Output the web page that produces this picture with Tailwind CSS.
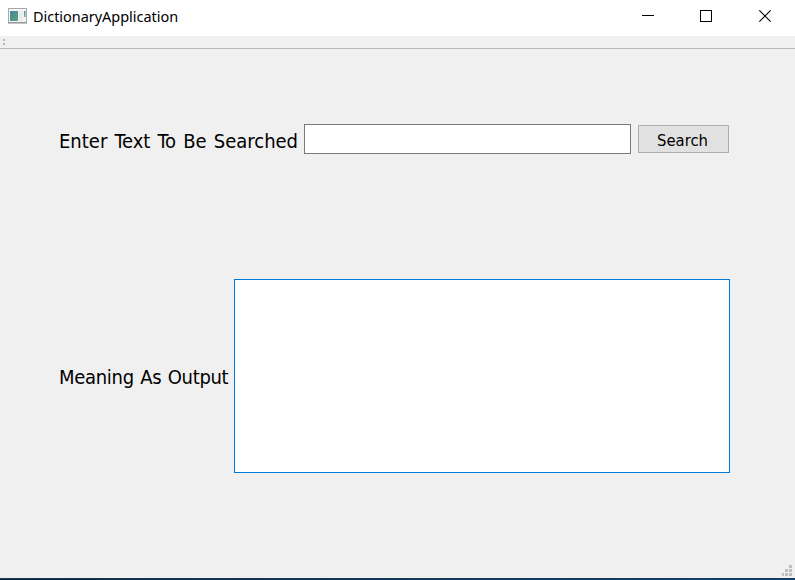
<!DOCTYPE html>
<html lang="en">
<head>
<meta charset="utf-8">
<title>DictionaryApplication</title>
<script src="https://cdn.jsdelivr.net/npm/@tailwindcss/browser@4"></script>
</head>
<body class="h-[580px] w-[795px] overflow-hidden bg-[#f0f0f0] font-['Noto_Sans',sans-serif] text-black">
<div class="flex h-full flex-col">
  <header class="flex h-9 shrink-0 items-start bg-white pl-2">
    <svg class="mt-2 h-4 w-[19px] shrink-0" viewBox="0 0 19 16">
      <defs>
        <linearGradient id="g" x1="0" y1="0" x2="1" y2="1"><stop offset="0" stop-color="#4a80a0"/><stop offset="1" stop-color="#55a878"/></linearGradient>
        <linearGradient id="b" x1="0" y1="0" x2="0" y2="1"><stop offset="0" stop-color="#5289b4"/><stop offset="1" stop-color="#62b87c"/></linearGradient>
      </defs>
      <rect x=".5" y=".5" width="18" height="14" fill="#f4f5f6" stroke="#a5a8ad"/>
      <path d="M0 15h19" stroke="#85888d"/>
      <rect x="2" y="3" width="8" height="10" fill="url(#g)"/>
      <path d="M11 3h4v10h-4z" fill="#e9ebed"/>
      <rect x="16" y="3" width="1.5" height="6" fill="url(#b)"/>
    </svg>
    <h1 class="ml-[6px] mt-[6px] whitespace-nowrap text-[14.5px] leading-[21px] tracking-[-0.04px]">DictionaryApplication</h1>
    <div class="ml-auto mr-6 mt-[10px] flex gap-[46px]">
      <svg class="size-3" viewBox="0 0 12 12" shape-rendering="crispEdges"><path d="M0 5.5h12" stroke="#000"/></svg>
      <svg class="size-3" viewBox="0 0 12 12" shape-rendering="crispEdges"><rect x=".5" y=".5" width="11" height="11" fill="none" stroke="#000"/></svg>
      <svg class="ml-px size-3" viewBox="0 0 12 12"><path d="M.3.3l11.4 11.4M11.7.3L.3 11.7" stroke="#000" stroke-width="1.1"/></svg>
    </div>
  </header>
  <div class="h-[13px] shrink-0 border-b border-[#b9b9b9]">
    <svg class="h-3 w-3" viewBox="0 0 12 12" shape-rendering="crispEdges"><path d="M3 3h2v2h-2zM3 7h2v2h-2z" fill="#b8b8b8"/></svg>
  </div>
  <main class="flex grow flex-col px-[59px] font-['DejaVu_Sans_Condensed','DejaVu_Sans',sans-serif] [font-stretch:condensed]">
    <div class="mt-[75px] flex h-[30px] shrink-0">
      <label for="q" class="w-[245px] shrink-0 whitespace-nowrap pt-[2px] text-[20px] leading-[30px] [word-spacing:1.4px]">Enter Text To Be Searched</label>
      <input id="q" class="h-[30px] w-[327px] border border-[#7a7a7a] bg-white outline-none">
      <button class="ml-[7px] mt-px h-7 w-[91px] border border-[#adadad] bg-[#e1e1e1] pr-[2px] pt-[4px] text-[16.5px] leading-[22px]">Search</button>
    </div>
    <div class="mt-[125px] flex h-[194px] shrink-0 items-center">
      <label for="out" class="w-[175px] shrink-0 whitespace-nowrap pt-[2px] text-[20px] leading-[30px] tracking-[-0.3px] [word-spacing:1px]">Meaning As Output</label>
      <textarea id="out" class="h-[194px] w-[496px] resize-none border border-[#0078d7] bg-white outline-none"></textarea>
    </div>
  </main>
  <footer class="flex shrink-0 justify-end pb-[2px] pr-[3px]">
    <svg class="h-[11px] w-[10px]" viewBox="0 0 10 11" shape-rendering="crispEdges"><path d="M7 0h3v3h-3zM3 4h3v3h-3zM7 4h3v3h-3zM0 8h2v3h-2zM3 8h3v3h-3zM7 8h3v3h-3z" fill="#bfbfbf"/></svg>
  </footer>
  <div class="h-[2px] shrink-0 border-t border-[#1c3a50] bg-linear-to-r from-[#062544] to-[#064583]"></div>
</div>
</body>
</html>
